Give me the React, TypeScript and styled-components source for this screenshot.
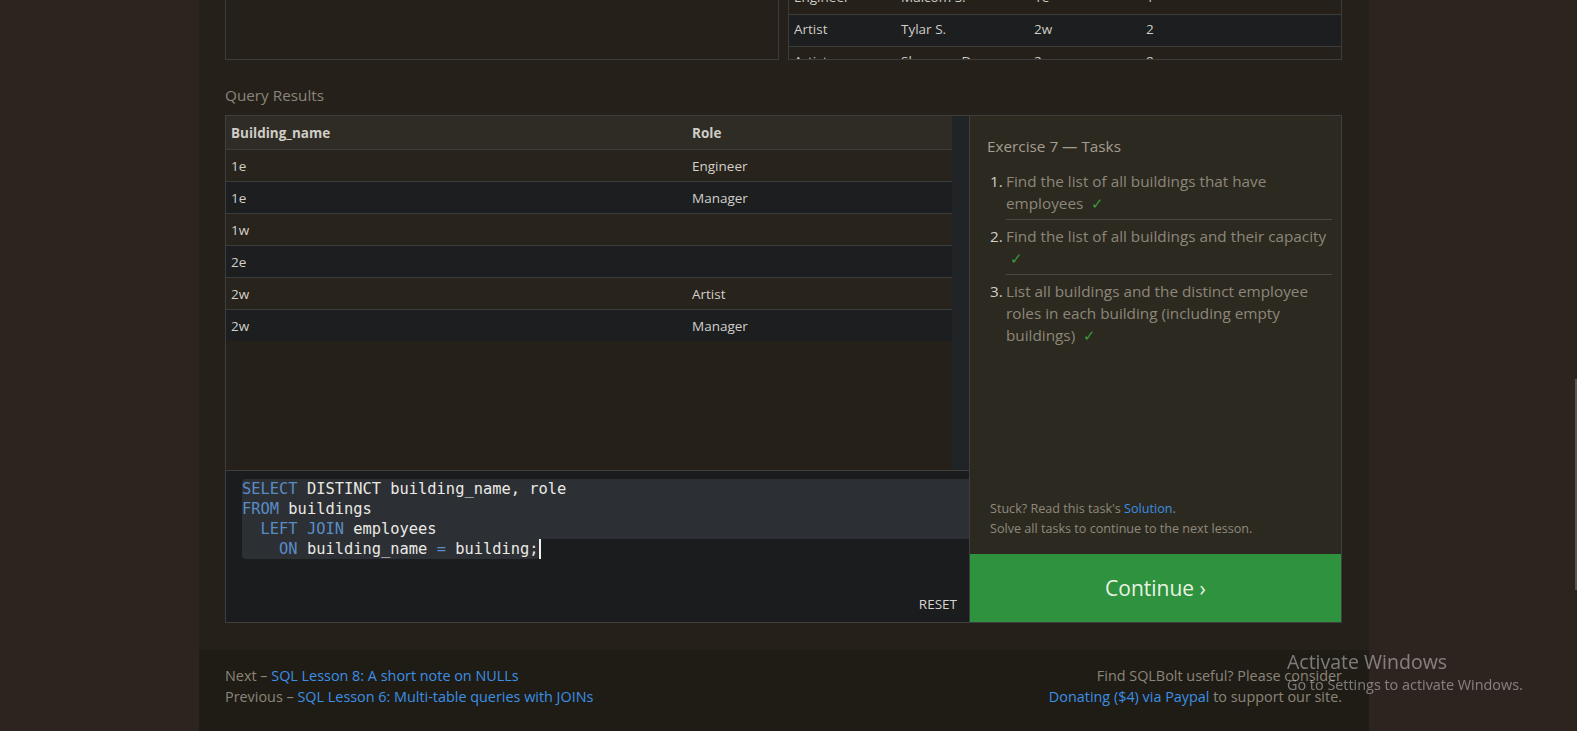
import React from "react"
import styled, { createGlobalStyle } from "styled-components"

// data shown in the page

const peekRows = [
    { role: "Engineer", name: "Malcom S.", building: "1e", years: "1" },
    { role: "Artist", name: "Tylar S.", building: "2w", years: "2" },
    { role: "Artist", name: "Sherman D.", building: "2w", years: "8" },
]

const resultRows = [
    ["1e", "Engineer"],
    ["1e", "Manager"],
    ["1w", ""],
    ["2e", ""],
    ["2w", "Artist"],
    ["2w", "Manager"],
]

const tasks = [
    "Find the list of all buildings that have employees",
    "Find the list of all buildings and their capacity",
    "List all buildings and the distinct employee roles in each building (including empty buildings)",
]

function App() {
    return (
        <>
            <GlobalStyle />
            <Column>
                <Inner>
                    <TopRow>
                        <Box />
                        <Box>
                            <PeekBody>
                                {peekRows.map((r, i) => (
                                    <PeekRow key={i} $dark={i === 1}>
                                        <span>{r.role}</span>
                                        <span>{r.name}</span>
                                        <span>{r.building}</span>
                                        <span>{r.years}</span>
                                    </PeekRow>
                                ))}
                            </PeekBody>
                        </Box>
                    </TopRow>

                    <SectionLabel>Query Results</SectionLabel>

                    <Workbench>
                        <LeftPane>
                            <ResultsArea>
                                <ResultTable>
                                    <HeadRow>
                                        <span>Building_name</span>
                                        <span>Role</span>
                                    </HeadRow>
                                    {resultRows.map((r, i) => (
                                        <ResultRow key={i} $dark={i % 2 === 1}>
                                            <span>{r[0]}</span>
                                            <span>{r[1]}</span>
                                        </ResultRow>
                                    ))}
                                </ResultTable>
                                <ScrollTrack />
                            </ResultsArea>

                            <Editor>
                                <Code>
                                    <CodeLine $selected $first>
                                        <Kw>SELECT</Kw> DISTINCT building_name, role
                                    </CodeLine>
                                    <CodeLine $selected>
                                        <Kw>FROM</Kw> buildings
                                    </CodeLine>
                                    <CodeLine $selected>
                                        {"  "}<Kw>LEFT JOIN</Kw> employees
                                    </CodeLine>
                                    <CodeLine>
                                        <LastSelection>
                                            {"    "}<Kw>ON</Kw> building_name <Kw>=</Kw> building;
                                        </LastSelection>
                                        <Cursor />
                                    </CodeLine>
                                </Code>
                                <ResetRow>
                                    <ResetButton>RESET</ResetButton>
                                </ResetRow>
                            </Editor>
                        </LeftPane>

                        <TasksPane>
                            <TasksBody>
                                <TasksTitle>Exercise 7 — Tasks</TasksTitle>
                                <TaskList>
                                    {tasks.map((t, i) => (
                                        <TaskItem key={i}>
                                            <TaskNum>{i + 1}.</TaskNum>
                                            <TaskText $last={i === tasks.length - 1}>
                                                {t} <Check>{"\u00a0✓"}</Check>
                                            </TaskText>
                                        </TaskItem>
                                    ))}
                                </TaskList>
                            </TasksBody>
                            <Hint>
                                Stuck? Read this task's <Link>Solution</Link>.
                                <br />
                                Solve all tasks to continue to the next lesson.
                            </Hint>
                            <ContinueButton>Continue ›</ContinueButton>
                        </TasksPane>
                    </Workbench>
                </Inner>

                <Footer>
                    <FooterCol>
                        <div>Next – <Link>SQL Lesson 8: A short note on NULLs</Link></div>
                        <div>Previous – <Link>SQL Lesson 6: Multi-table queries with JOINs</Link></div>
                    </FooterCol>
                    <FooterCol $right>
                        <div>Find SQLBolt useful? Please consider</div>
                        <div><Link>Donating ($4) via Paypal</Link> to support our site.</div>
                    </FooterCol>
                </Footer>
            </Column>

            <Watermark>
                <WatermarkTitle>Activate Windows</WatermarkTitle>
                <WatermarkSub>Go to Settings to activate Windows.</WatermarkSub>
            </Watermark>
            <PageScrollThumb />
        </>
    )
}

// styled-components

const GlobalStyle = createGlobalStyle`
    html, body {
        margin: 0;
        padding: 0;
        background: #2d2420;
        font-family: "Open Sans", "Noto Sans", sans-serif;
        overflow: hidden;
    }
    #root {
        height: 731px;
        overflow: hidden;
    }
`

const Column = styled.div`
    width: 1170px;
    margin-left: 199px;
    height: 731px;
    background: #25211a;
    display: flex;
    flex-direction: column;
`

const Inner = styled.div`
    padding: 0 27px 0 26px;
`

const TopRow = styled.div`
    display: grid;
    grid-template-columns: 1fr 1fr;
    column-gap: 9px;
    height: 60px;
`

const Box = styled.div`
    border: 1px solid #3b3b3b;
    border-top: none;
    overflow: hidden;
    box-sizing: border-box;
`

const PeekBody = styled.div`
    margin-top: -17px;
`

const PeekRow = styled.div<{ $dark?: boolean }>`
    display: grid;
    grid-template-columns: 107px 133px 112px 1fr;
    height: 31px;
    line-height: 29px;
    padding-left: 5px;
    border-bottom: 1px solid #3b3c3c;
    background: ${p => (p.$dark ? "#1c1e20" : "transparent")};
    color: #cfcdc6;
    font-size: 13.5px;
`

const SectionLabel = styled.div`
    margin-top: 24px;
    line-height: 22px;
    font-size: 15.3px;
    color: #8b8579;
`

const Workbench = styled.div`
    margin-top: 9px;
    height: 508px;
    box-sizing: border-box;
    border: 1px solid #3e3e3e;
    display: grid;
    grid-template-columns: 744px 1fr;
`

const LeftPane = styled.div`
    display: flex;
    flex-direction: column;
    border-right: 1px solid #3e3e3e;
    min-width: 0;
`

const ResultsArea = styled.div`
    height: 354px;
    display: grid;
    grid-template-columns: 726px 17px;
`

const ResultTable = styled.div`
    display: flex;
    flex-direction: column;
    color: #d2d0ca;
    font-size: 13.5px;
`

const HeadRow = styled.div`
    display: grid;
    grid-template-columns: 461px 1fr;
    height: 33px;
    align-items: center;
    padding-left: 5px;
    background: #2e2c25;
    font-weight: 700;
    color: #cfcdc6;
`

const ResultRow = styled.div<{ $dark?: boolean }>`
    display: grid;
    grid-template-columns: 461px 1fr;
    height: 31px;
    align-items: center;
    padding-left: 5px;
    border-top: 1px solid #3b3c3c;
    background: ${p => (p.$dark ? "#1c1e20" : "#28231c")};
`

const ScrollTrack = styled.div`
    background: #202427;
`

const Editor = styled.div`
    flex: 1;
    display: flex;
    flex-direction: column;
    border-top: 1px solid #3e3e3e;
    background: #1b1c1e;
    padding-top: 8px;
`

const Code = styled.div`
    padding-left: 16px;
    font-family: "DejaVu Sans Mono", "Liberation Mono", monospace;
    font-size: 15.4px;
    color: #ebe9e4;
    white-space: pre;
`

const CodeLine = styled.div<{ $selected?: boolean; $first?: boolean }>`
    height: 20px;
    line-height: 20px;
    background: ${p => (p.$selected ? "#2c3034" : "transparent")};
    border-top-left-radius: ${p => (p.$first ? "4px" : "0")};
`

const LastSelection = styled.span`
    display: inline-block;
    height: 20px;
    vertical-align: top;
    background: #2c3034;
    border-radius: 0 0 4px 4px;
`

const Cursor = styled.span`
    display: inline-block;
    width: 2px;
    height: 20px;
    vertical-align: top;
    background: #f0f0f0;
`

const Kw = styled.span`
    color: #5a8cc6;
`

const ResetRow = styled.div`
    margin-top: auto;
    display: flex;
    justify-content: flex-end;
    padding: 0 12px 8px 0;
`

const ResetButton = styled.span`
    font-size: 13.5px;
    line-height: 20px;
    color: #d6d4d0;
`

const TasksPane = styled.div`
    display: flex;
    flex-direction: column;
    background: #2c2920;
`

const TasksBody = styled.div`
    padding: 19px 9px 0 17px;
`

const TasksTitle = styled.div`
    font-size: 15.3px;
    line-height: 22px;
    color: #a39d90;
`

const TaskList = styled.div`
    margin-top: 8px;
`

const TaskItem = styled.div`
    display: flex;
    font-size: 15.3px;
    line-height: 22.4px;
    color: #8d877a;
`

const TaskNum = styled.span`
    width: 16px;
    margin-left: 3px;
    padding-top: 5px;
    color: #d0cec8;
`

const TaskText = styled.div<{ $last?: boolean }>`
    flex: 1;
    padding: 5px 0 4px;
    border-bottom: ${p => (p.$last ? "none" : "1px solid #4a4840")};
`

const Check = styled.span`
    color: #3a9a3e;
`

const Hint = styled.div`
    margin-top: auto;
    padding: 0 20px;
    margin-bottom: 15px;
    font-size: 12.6px;
    line-height: 20px;
    color: #8f897c;
`

const Link = styled.span`
    color: #3b8fe4;
`

const ContinueButton = styled.div`
    height: 68px;
    display: flex;
    align-items: center;
    justify-content: center;
    background: #2e923f;
    color: #eaf2e4;
    font-size: 21px;
`

const Footer = styled.div`
    margin-top: 27px;
    flex: 1;
    background: #1f1c16;
    padding: 15px 27px 0 26px;
    display: flex;
    justify-content: space-between;
`

const FooterCol = styled.div<{ $right?: boolean }>`
    font-size: 14.4px;
    line-height: 21px;
    color: #8b8579;
    text-align: ${p => (p.$right ? "right" : "left")};
`

const Watermark = styled.div`
    position: fixed;
    left: 1287px;
    top: 649px;
    color: rgba(255, 255, 255, 0.42);
    pointer-events: none;
`

const WatermarkTitle = styled.div`
    font-size: 19.5px;
    line-height: 26px;
`

const WatermarkSub = styled.div`
    font-size: 14.4px;
    line-height: 20px;
`

const PageScrollThumb = styled.div`
    position: fixed;
    right: 0;
    top: 379px;
    width: 2px;
    height: 211px;
    background: #5a5451;
`

export default App
